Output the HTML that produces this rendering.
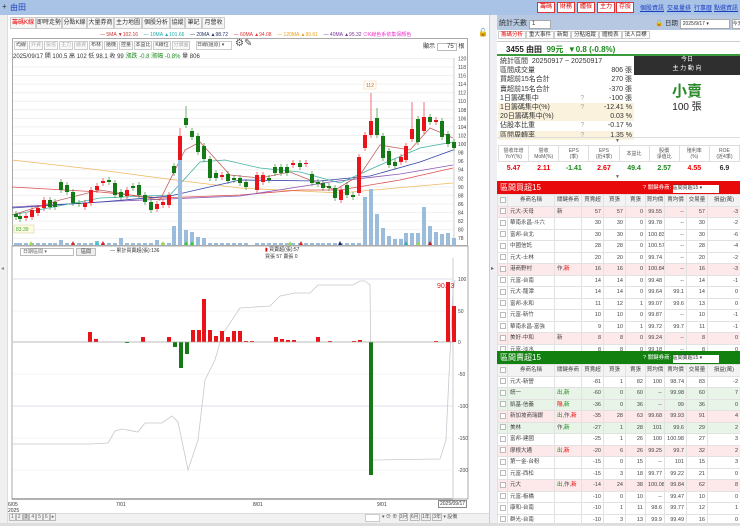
<!DOCTYPE html>
<html><head><meta charset="utf-8">
<style>
*{margin:0;padding:0;box-sizing:border-box}
body{width:740px;height:526px;overflow:hidden;background:#fff;font-family:"Liberation Sans","Noto Sans CJK TC",sans-serif;font-size:7px;color:#333;position:relative}
.a{position:absolute;white-space:nowrap}
.tab{position:absolute;top:17px;height:12px;border:1px solid #ccc;background:#f6f6f6;font-size:6px;line-height:10px;color:#333;overflow:hidden;text-align:center}
.tb{position:absolute;top:41px;height:9px;border:1px solid #ccc;background:#fafafa;font-size:5px;line-height:7px;color:#444;overflow:hidden;width:14px;text-align:center}
.rb{position:absolute;top:2px;height:11px;width:18px;border:1px solid #d33;background:#fff;color:#d00;font-size:6px;line-height:9px;text-align:center;overflow:hidden}
.lk{position:absolute;top:3px;color:#1a3fc0;text-decoration:underline;font-size:6px}
table{border-collapse:collapse}
.st td{height:9.2px;line-height:9px;font-size:7px;padding:0 2px;white-space:nowrap}
.tbl{position:absolute;left:497px;width:243px;table-layout:fixed}
.tbl td{border:1px solid #e2e2e2;height:11.5px;font-size:5.5px;line-height:10px;text-align:right;padding:0 2px;color:#444;white-space:nowrap;overflow:hidden}
.tbl tr{height:11.5px}
.tbl td:nth-child(2){text-align:left}
.hd td{text-align:center!important;background:#f3f3f3;padding:0!important}
.pk td{background:#fde8ea}
.gn td{background:#e9f4e8}
.cb{display:inline-block;width:6px;height:6px;border:1px solid #bbb;background:#fff;vertical-align:middle}
.r{color:#e00}.g{color:#1a8a1a}
</style></head><body>
<div class="a" style="left:0;top:0;width:740px;height:15px;background:#a9c3e7"></div>
<div class="a" style="left:2px;top:2px;font-size:8px;color:#234">+</div>
<div class="a" style="left:10px;top:2px;font-size:8px;color:#1b3fb8">由田</div>
<div class="rb" style="left:537px">籌碼</div><div class="rb" style="left:557px">財務</div><div class="rb" style="left:577px">體檢</div><div class="rb" style="left:597px">主力</div><div class="rb" style="left:616px">存股</div>
<div class="lk" style="left:640px">個股資訊</div><div class="lk" style="left:667px">交易量排</div><div class="lk" style="left:694px">行事曆</div><div class="lk" style="left:714px">點選資訊</div>

<div class="a" style="left:0;top:15px;width:8px;height:511px;background:#f0f0f0;border-right:1px solid #ddd"></div>
<div class="a" style="left:1px;top:265px;font-size:6px;color:#888">◂</div>
<div class="a" style="left:489px;top:15px;width:8px;height:511px;background:#eef0f3;border-left:1px solid #ccc"></div>
<div class="a" style="left:491px;top:265px;font-size:6px;color:#666">▸</div>

<div class="tab" style="left:10px;width:26px;color:#e00">籌碼K線</div>
<div class="tab" style="left:36px;width:26px">即時走勢</div>
<div class="tab" style="left:62px;width:25px">分點K線</div>
<div class="tab" style="left:87px;width:27px">大量券商</div>
<div class="tab" style="left:114px;width:28px">主力地圖</div>
<div class="tab" style="left:142px;width:28px">個股分析</div>
<div class="tab" style="left:170px;width:15px">協縱</div>
<div class="tab" style="left:185px;width:17px">筆記</div>
<div class="tab" style="left:202px;width:23px">月營收</div>

<div class="a" style="left:100px;top:31px;font-size:5px">
<span style="color:#c33">— 5MA ▼102.16</span>&nbsp;&nbsp;&nbsp;&nbsp;<span style="color:#2aa">— 10MA ▲101.66</span>&nbsp;&nbsp;&nbsp;&nbsp;<span style="color:#236">— 20MA ▲98.72</span>&nbsp;&nbsp;&nbsp;&nbsp;<span style="color:#d33">— 60MA ▲94.08</span>&nbsp;&nbsp;&nbsp;&nbsp;<span style="color:#e9a020">— 120MA ▲90.61</span>&nbsp;&nbsp;&nbsp;&nbsp;<span style="color:#739">— 40MA ▲95.32</span> <span style="color:#e3c">⊙K線色系依集保顏色</span></div>
<div class="a" style="left:478px;top:28px;font-size:8px">🔓</div>

<div class="a" style="left:12px;top:38px;width:456px;height:208px;border:1px solid #aaa"></div>
<div class="tb" style="left:14px">均線</div><div class="tb" style="left:29px;color:#aaa">外資</div><div class="tb" style="left:44px;color:#aaa">投信</div><div class="tb" style="left:59px;color:#aaa">主力</div><div class="tb" style="left:74px;color:#aaa">融資</div><div class="tb" style="left:89px">布林</div><div class="tb" style="left:104px">隨機</div><div class="tb" style="left:119px">控量</div><div class="tb" style="left:134px;width:18px">本益比</div><div class="tb" style="left:153px;width:18px">K線位</div><div class="tb" style="left:172px;width:18px;color:#aaa">分價圖</div>
<div class="tb" style="left:196px;width:36px;background:#fff;text-align:left">日線(還原) ▾</div>
<div class="a" style="left:235px;top:38px;font-size:10px;color:#555">⚙✎</div>
<div class="a" style="left:423px;top:41px;font-size:6px">顯示 <span style="display:inline-block;width:20px;border:1px solid #bbb;text-align:right;padding-right:2px">75</span> 根</div>
<div class="a" style="left:13px;top:51px;font-size:6px">2025/09/17 開 100.5 高 102 低 98.1 收 99 <span class="g">漲跌 -0.8 漲幅 -0.8%</span> 量 806</div>

<svg class="a" style="left:0;top:0" width="490" height="526" id="ch"></svg>

<div class="a" style="left:20px;top:248px;width:54px;height:8px;border:1px solid #bbb;font-size:5px;line-height:6px;color:#666;padding-left:2px">日期區間 ▾</div>
<div class="a" style="left:76px;top:248px;width:20px;height:8px;border:1px solid #bbb;background:#eee;font-size:5px;line-height:6px;text-align:center">區間</div>
<div class="a" style="left:110px;top:247px;font-size:5px">— 累計買賣超(張):136</div>
<div class="a" style="left:265px;top:247px;font-size:5px;line-height:7px"><span style="color:#e00">▮</span> 買賣超(張):57<br>買張 57 賣張 0</div>
<div class="a" style="left:437px;top:283px;font-size:7px;color:#d22">90.13</div>

<div class="a" style="left:8px;top:502px;font-size:5px;line-height:6px">6/05<br>2025</div>
<div class="a" style="left:116px;top:502px;font-size:5px">7/01</div>
<div class="a" style="left:253px;top:502px;font-size:5px">8/01</div>
<div class="a" style="left:377px;top:502px;font-size:5px">9/01</div>
<div class="a" style="left:438px;top:500px;font-size:5px;border:1px solid #888;padding:0 1px;background:#fff">2025/09/17</div>
<div class="a" style="left:8px;top:513px;width:481px;height:10px;background:#f1f1f1;border-top:1px solid #ddd"></div>
<div class="a" style="left:9px;top:514px;font-size:5px;color:#666">
<span style="border:1px solid #bbb;padding:0 1px">1</span><span style="border:1px solid #bbb;padding:0 1px">2</span><span style="border:1px solid #bbb;padding:0 1px;background:#ccc">3</span><span style="border:1px solid #bbb;padding:0 1px">4</span><span style="border:1px solid #bbb;padding:0 1px">5</span><span style="border:1px solid #bbb;padding:0 1px">6</span><span style="border:1px solid #bbb;padding:0 1px">▸</span></div>
<div class="a" style="left:365px;top:514px;width:15px;height:8px;background:#fff;border:1px solid #ccc"></div>
<div class="a" style="left:382px;top:513px;font-size:5px;color:#555">▾ ⊖ ⊕ <span style="border:1px solid #bbb">3月</span> <span style="border:1px solid #bbb">6月</span> <span style="border:1px solid #bbb">1年</span> <span style="border:1px solid #bbb">3年</span> ▾ 設備</div>
<div class="a" style="left:0;top:523px;width:740px;height:3px;background:#ddd"></div>

<div class="a" style="left:497px;top:15px;width:243px;height:15px;background:#b7c9e2"></div>
<div class="a" style="left:499px;top:18px;font-size:7px">統計天數 <span style="display:inline-block;width:22px;height:9px;background:#fff;border:1px solid #aaa;font-size:6px;line-height:7px;padding-left:2px">1</span></div>
<div class="a" style="left:655px;top:17px;font-size:6.5px">🔒 日期 <span style="display:inline-block;width:50px;height:10px;background:#fff;border:1px solid #aaa;font-size:5px;line-height:8px;padding-left:2px">2025/9/17 ▾</span> <span style="display:inline-block;height:10px;background:#fff;border:1px solid #aaa;font-size:5px;line-height:8px">今天</span></div>
<div class="a" style="left:497px;top:30px;width:243px;height:12px;border-bottom:1px solid #ccc"></div>
<div class="a" style="left:498px;top:31px;font-size:5.5px;line-height:9px">
<span style="border:1px solid #ccc;padding:0 2px;color:#e00">籌碼分析</span><span style="border:1px solid #ccc;padding:0 2px">重大事件</span><span style="border:1px solid #ccc;padding:0 2px">新聞</span><span style="border:1px solid #ccc;padding:0 2px">分點追蹤</span><span style="border:1px solid #ccc;padding:0 2px">體檢表</span><span style="border:1px solid #ccc;padding:0 2px">法人目標</span></div>
<div class="a" style="left:497px;top:42px;width:243px;height:14px;border-bottom:2px solid #3a9a3a"></div>
<div class="a" style="left:506px;top:44px;font-size:8px;font-weight:bold;color:#222">3455 由田 <span class="g">&nbsp;99元 &nbsp;▼0.8 (-0.8%)</span></div>

<table class="st a" style="left:498px;top:57px;width:136px">
<tr><td colspan="3">統計區間&nbsp; 20250917 ~ 20250917</td></tr>
<tr><td>區間成交量</td><td></td><td align="right">806 張</td></tr>
<tr><td>買超前15名合計</td><td></td><td align="right">270 張</td></tr>
<tr><td>賣超前15名合計</td><td></td><td align="right">-370 張</td></tr>
<tr><td>1日籌碼集中</td><td style="color:#aaa">?</td><td align="right">-100 張</td></tr>
<tr style="background:#faf2dc"><td>1日籌碼集中(%)</td><td style="color:#aaa">?</td><td align="right">-12.41 %</td></tr>
<tr style="background:#faf2dc"><td>20日籌碼集中(%)</td><td></td><td align="right">0.03 %</td></tr>
<tr><td>佔股本比重</td><td style="color:#aaa">?</td><td align="right">-0.17 %</td></tr>
<tr style="background:#faf2dc"><td>區間周轉率</td><td style="color:#aaa">?</td><td align="right">1.35 %</td></tr>
</table>
<div class="a" style="left:634px;top:56px;width:106px;height:19px;background:#2f2f2f;color:#fff;text-align:center;font-size:6px;line-height:9px">今日<br>主 力 動 向</div>
<div class="a" style="left:634px;top:80px;width:106px;text-align:center;font-size:15px;color:#2a8a2a;font-weight:bold">小賣</div>
<div class="a" style="left:634px;top:98px;width:106px;text-align:center;font-size:10px;color:#222">100 張</div>
<div class="a" style="left:497px;top:137px;width:243px;height:1px;background:#ddd"></div>
<div class="a" style="left:615px;top:138px;font-size:5px;color:#666">▼</div>
<table class="a" style="left:498px;top:145px;width:242px;font-size:5px;text-align:center;table-layout:fixed">
<tr style="height:16px;color:#555;line-height:6px"><td style="border:1px solid #ddd">營收年增<br>YoY(%)</td><td style="border:1px solid #ddd">營收<br>MoM(%)</td><td style="border:1px solid #ddd">EPS<br>(季)</td><td style="border:1px solid #ddd">EPS<br>(近4季)</td><td style="border:1px solid #ddd">本益比</td><td style="border:1px solid #ddd">股價<br>淨值比</td><td style="border:1px solid #ddd">殖利率<br>(%)</td><td style="border:1px solid #ddd">ROE<br>(近4季)</td></tr>
<tr style="height:14px;font-size:7px;font-weight:bold"><td class="r">5.47</td><td class="r">2.11</td><td class="g">-1.41</td><td class="r">2.67</td><td class="g">49.4</td><td class="g">2.57</td><td class="r">4.55</td><td>6.9</td></tr>
</table>
<div class="a" style="left:615px;top:174px;font-size:5px;color:#666">▼</div>

<div class="a" style="left:497px;top:181px;width:243px;height:13px;background:#e8090b"></div>
<div class="a" style="left:500px;top:182px;font-size:8px;color:#fff">區間買超15</div>
<div class="a" style="left:643px;top:183px;font-size:5.5px;color:#fff">? 關鍵券商: <span style="display:inline-block;width:46px;height:8px;background:#fff;color:#333;font-size:5px;line-height:7px">區間買超15 ▾</span></div>
<table class="tbl" style="top:194px">
<colgroup><col style="width:10px"><col style="width:47px"><col style="width:27px"><col style="width:22px"><col style="width:22px"><col style="width:20px"><col style="width:19px"><col style="width:22px"><col style="width:21px"><col style="width:33px"></colgroup>
<tr class="hd"><td><span class="cb"></span></td><td>券商名稱</td><td>關鍵券商</td><td>買賣超</td><td>買張</td><td>賣張</td><td>買均價</td><td>賣均價</td><td>交易量</td><td>損益(萬)</td></tr>
<tr class="pk"><td><span class="cb"></span></td><td>元大-天母</td><td style="text-align:left" class="r">新</td><td>57</td><td>57</td><td>0</td><td>99.55</td><td>--</td><td>57</td><td>-3</td></tr>
<tr><td><span class="cb"></span></td><td>華南永昌-斗六</td><td></td><td>30</td><td>30</td><td>0</td><td>99.78</td><td>--</td><td>30</td><td>-2</td></tr>
<tr><td><span class="cb"></span></td><td>富邦-台北</td><td></td><td>30</td><td>30</td><td>0</td><td>100.83</td><td>--</td><td>30</td><td>-6</td></tr>
<tr><td><span class="cb"></span></td><td>中國信託</td><td></td><td>28</td><td>28</td><td>0</td><td>100.57</td><td>--</td><td>28</td><td>-4</td></tr>
<tr><td><span class="cb"></span></td><td>元大-士林</td><td></td><td>20</td><td>20</td><td>0</td><td>99.74</td><td>--</td><td>20</td><td>-2</td></tr>
<tr class="pk"><td><span class="cb"></span></td><td>港商野村</td><td style="text-align:left">作,<span class="r">新</span></td><td>16</td><td>16</td><td>0</td><td>100.84</td><td>--</td><td>16</td><td>-3</td></tr>
<tr><td><span class="cb"></span></td><td>元富-台南</td><td></td><td>14</td><td>14</td><td>0</td><td>99.48</td><td>--</td><td>14</td><td>-1</td></tr>
<tr><td><span class="cb"></span></td><td>元大-龍潭</td><td></td><td>14</td><td>14</td><td>0</td><td>99.64</td><td>99.1</td><td>14</td><td>0</td></tr>
<tr><td><span class="cb"></span></td><td>富邦-永和</td><td></td><td>11</td><td>12</td><td>1</td><td>99.07</td><td>99.6</td><td>13</td><td>0</td></tr>
<tr><td><span class="cb"></span></td><td>元富-新竹</td><td></td><td>10</td><td>10</td><td>0</td><td>99.87</td><td>--</td><td>10</td><td>-1</td></tr>
<tr><td><span class="cb"></span></td><td>華南永昌-富強</td><td></td><td>9</td><td>10</td><td>1</td><td>99.72</td><td>99.7</td><td>11</td><td>-1</td></tr>
<tr class="pk"><td><span class="cb"></span></td><td>美好-中和</td><td style="text-align:left" class="r">新</td><td>8</td><td>8</td><td>0</td><td>99.24</td><td>--</td><td>8</td><td>0</td></tr>
<tr><td><span class="cb"></span></td><td>元富-淡水</td><td></td><td>8</td><td>8</td><td>0</td><td>99.18</td><td>--</td><td>8</td><td>0</td></tr>
</table>

<div class="a" style="left:497px;top:351px;width:243px;height:13px;background:#11800f"></div>
<div class="a" style="left:500px;top:352px;font-size:8px;color:#fff">區間賣超15</div>
<div class="a" style="left:643px;top:353px;font-size:5.5px;color:#fff">? 關鍵券商: <span style="display:inline-block;width:46px;height:8px;background:#fff;color:#333;font-size:5px;line-height:7px">區間賣超15 ▾</span></div>
<table class="tbl" style="top:364px">
<colgroup><col style="width:10px"><col style="width:47px"><col style="width:27px"><col style="width:22px"><col style="width:22px"><col style="width:20px"><col style="width:19px"><col style="width:22px"><col style="width:21px"><col style="width:33px"></colgroup>
<tr class="hd"><td><span class="cb"></span></td><td>券商名稱</td><td>關鍵券商</td><td>買賣超</td><td>買張</td><td>賣張</td><td>買均價</td><td>賣均價</td><td>交易量</td><td>損益(萬)</td></tr>
<tr><td><span class="cb"></span></td><td>元大-新營</td><td></td><td>-81</td><td>1</td><td>82</td><td>100</td><td>98.74</td><td>83</td><td>-2</td></tr>
<tr class="gn"><td><span class="cb"></span></td><td>統一</td><td style="text-align:left"><span class="g">出</span>,<span class="g">新</span></td><td>-60</td><td>0</td><td>60</td><td>--</td><td>99.98</td><td>60</td><td>7</td></tr>
<tr class="gn"><td><span class="cb"></span></td><td>凱基-信義</td><td style="text-align:left"><span class="r">隔</span>,<span class="g">新</span></td><td>-36</td><td>0</td><td>36</td><td>--</td><td>99</td><td>36</td><td>0</td></tr>
<tr class="pk"><td><span class="cb"></span></td><td>新加坡商瑞銀</td><td style="text-align:left"><span class="g">出</span>,作,<span class="r">新</span></td><td>-35</td><td>28</td><td>63</td><td>99.68</td><td>99.93</td><td>91</td><td>4</td></tr>
<tr class="gn"><td><span class="cb"></span></td><td>美林</td><td style="text-align:left">作,<span class="g">新</span></td><td>-27</td><td>1</td><td>28</td><td>101</td><td>99.6</td><td>29</td><td>2</td></tr>
<tr><td><span class="cb"></span></td><td>富邦-建國</td><td></td><td>-25</td><td>1</td><td>26</td><td>100</td><td>100.98</td><td>27</td><td>3</td></tr>
<tr class="pk"><td><span class="cb"></span></td><td>摩根大通</td><td style="text-align:left"><span class="g">出</span>,<span class="r">新</span></td><td>-20</td><td>6</td><td>26</td><td>99.25</td><td>99.7</td><td>32</td><td>2</td></tr>
<tr><td><span class="cb"></span></td><td>第一金-台粉</td><td></td><td>-15</td><td>0</td><td>15</td><td>--</td><td>101</td><td>15</td><td>3</td></tr>
<tr><td><span class="cb"></span></td><td>元富-西松</td><td></td><td>-15</td><td>3</td><td>18</td><td>99.77</td><td>99.22</td><td>21</td><td>0</td></tr>
<tr class="pk"><td><span class="cb"></span></td><td>元大</td><td style="text-align:left"><span class="g">出</span>,作,<span class="r">新</span></td><td>-14</td><td>24</td><td>38</td><td>100.08</td><td>99.84</td><td>62</td><td>8</td></tr>
<tr><td><span class="cb"></span></td><td>元富-板橋</td><td></td><td>-10</td><td>0</td><td>10</td><td>--</td><td>99.47</td><td>10</td><td>0</td></tr>
<tr><td><span class="cb"></span></td><td>康和-台南</td><td></td><td>-10</td><td>1</td><td>11</td><td>98.6</td><td>99.77</td><td>12</td><td>1</td></tr>
<tr><td><span class="cb"></span></td><td>群光-台南</td><td></td><td>-10</td><td>3</td><td>13</td><td>99.9</td><td>99.49</td><td>16</td><td>0</td></tr>
</table>

<script>
var s=document.getElementById('ch'),h='';
function L(x1,y1,x2,y2,c,w){h+='<line x1="'+x1+'" y1="'+y1+'" x2="'+x2+'" y2="'+y2+'" stroke="'+c+'" stroke-width="'+(w||1)+'"/>';}
function R(x,y,w,hh,c){h+='<rect x="'+x+'" y="'+y+'" width="'+w+'" height="'+hh+'" fill="'+c+'"/>';}
function T(x,y,t,c,sz){h+='<text x="'+x+'" y="'+y+'" fill="'+(c||'#333')+'" font-size="'+(sz||5.5)+'">'+t+'</text>';}
function P(pts,c){h+='<polyline fill="none" stroke="'+c+'" stroke-width="0.8" points="'+pts+'"/>';}
for(var p=120;p>=78;p-=2){var y=67+(118-p)*4.28;L(13,y,454,y,'#f0f0f0');T(458,y+2,p,'#444',5);}
L(454,58,454,246,'#ccc');
P('12,160 100,170 175,180 240,188 340,193 453,183','#f0b860');
P('12,187 100,192 160,198 240,195 300,190 340,190 400,180 453,168','#e05050');
P('12,207 120,201 240,196 330,182 400,174 453,165','#8a5ab8');
P('12,208 100,202 170,196 240,180 320,181 370,176 420,162 453,150','#3344aa');
P('12,215 100,198 170,195 200,162 225,160 260,168 300,172 340,183 380,165 420,148 453,142','#40b0a0');
P('12,215 60,200 100,190 160,200 185,150 200,142 230,175 260,178 290,172 335,190 360,175 380,145 410,150 430,128 453,138','#c06060');
var c=[[16,214,217,'g'],[20,216,219,'g'],[26,216,218,'r'],[32,210,217,'r'],[38,208,213,'r'],[44,200,208,'r'],[50,200,207,'g'],[55,202,207,'g'],[61,182,190,'g'],[67,185,192,'g'],[73,192,203,'g'],[79,203,204,'g'],[85,203,207,'r'],[91,190,203,'r'],[97,186,190,'r'],[103,181,183,'r'],[109,180,182,'g'],[115,183,195,'g'],[121,192,197,'g'],[127,190,196,'r'],[133,186,188,'g'],[139,185,195,'g'],[145,195,202,'g'],[151,202,210,'g'],[157,204,209,'r'],[163,202,205,'r'],[169,195,205,'r'],[174,166,173,'g'],[180,136,170,'r'],[186,118,125,'g'],[192,131,137,'g'],[198,136,152,'g'],[204,146,159,'g'],[210,159,178,'g'],[216,173,178,'g'],[222,175,177,'r'],[228,174,181,'g'],[234,178,180,'g'],[240,178,183,'g'],[246,182,187,'g'],[257,175,190,'r'],[263,175,182,'r'],[269,178,180,'g'],[275,167,173,'g'],[281,167,173,'g'],[287,167,173,'g'],[293,163,165,'r'],[300,163,167,'g'],[306,163,164,'r'],[312,174,183,'g'],[318,182,184,'g'],[323,183,188,'g'],[329,186,188,'g'],[335,188,198,'g'],[341,190,200,'r'],[347,185,195,'g'],[353,195,197,'g'],[359,157,193,'r'],[365,135,148,'r'],[371,121,135,'r'],[377,118,135,'g'],[383,136,158,'g'],[389,151,165,'g'],[395,162,166,'g'],[401,157,162,'r'],[406,146,160,'r'],[412,129,139,'r'],[418,119,142,'g'],[424,117,131,'r'],[430,117,122,'g'],[436,120,122,'r'],[442,121,137,'g'],[448,134,144,'g'],[454,142,148,'g']];
var wk={186:106,371:93,180:128,412:102,424:102,377:108};
c.forEach(function(k){var col=k[3]=='r'?'#e8141a':'#157a15';var t=wk[k[0]]||k[1]-3;L(k[0],t,k[0],k[2]+3,col,0.6);R(k[0]-2,k[1],4,Math.max(1,k[2]-k[1]),col);});
T(366,87,'112','#d60',5);h+='<rect x="364" y="81" width="12" height="8" fill="none" stroke="#f5d0a0" stroke-width="0.5"/>';
h+='<rect x="14" y="225" width="20" height="8" fill="#fffbe0" stroke="#cc9" stroke-width="0.5"/>';T(16,231,'83.39','#3a3',5);
var v={174:226,180:160,186:230,192:232,198:237,204:238,365:197,371:189,377:214,383:228,389:236,395:239,401:239,406:233,412:233,418:233,424:207,430:226,436:232,442:234,448:233,454:238,61:240,97:241,121:238,157:240};
c.forEach(function(k){var t=v[k[0]]||243;R(k[0]-2,t,4,245-t,'#9cbcdc');});
[[31,'#9d4'],[73,'#d22'],[97,'#3cc'],[103,'#d22'],[163,'#9d4'],[186,'#3c3'],[192,'#3c3'],[290,'#9d4'],[301,'#d22'],[340,'#226'],[406,'#3aa'],[418,'#9d4'],[430,'#b22']].forEach(function(m){h+='<polygon points="'+(m[0]-2)+',245 '+(m[0]+2)+',245 '+m[0]+',241" fill="'+m[1]+'"/>';});
L(12,246,468,246,'#888');
h+='<rect x="12" y="246" width="456" height="253" fill="none" stroke="#aaa"/>';
L(12,499,453,499,'#666');L(453,258,453,499,'#ccc');
[[100,279],[50,311],[0,342],[-50,374],[-100,406],[-150,438],[-200,470]].forEach(function(a){L(13,a[1],453,a[1],a[0]==0?'#bbb':(a[0]==100||a[0]==-100?'#dde':'#f5f5f5'));T(458,a[1]+2,a[0],'#444',5);});
P('12,444 90,444 108,443 115,431 122,429 138,432 145,423 162,423 172,416 178,422 188,470 198,440 205,380 215,360 222,335 240,308 270,306 280,296 295,293 310,293 318,285 353,285 360,281 365,281 370,285 372,460 440,459 446,440 453,290 455,280','#c8c8d0');
var b=[[90,332],[96,339],[143,337],[169,337],[193,330],[199,330],[204,299],[210,330],[216,336],[222,331],[228,337],[234,331],[240,331],[246,341],[252,341],[276,337],[282,339],[288,340],[294,340],[318,337],[330,341],[354,341],[360,340],[436,341],[448,282],[454,306]];
b.forEach(function(k){R(k[0]-2,k[1],4,342-k[1],'#e8141a');});
[[127,343],[175,347],[181,368],[187,354],[371,475]].forEach(function(k){R(k[0]-2,342,4,k[1]-342,'#157a15');});
L(12,342,453,342,'#bbb',0.5);
s.innerHTML=h;
</script>
</body></html>
